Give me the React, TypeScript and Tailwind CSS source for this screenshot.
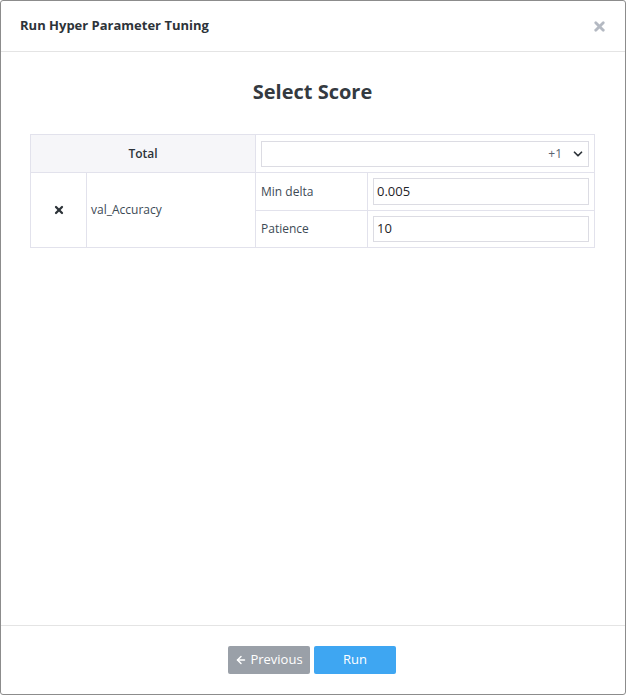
import { X, ChevronDown, ArrowLeft } from "lucide-react";

// Modal: pick a score for the tuning run.
export default function App() {
  return (
    <div className="flex h-[695px] w-[626px] flex-col rounded-[3px] border border-[#8c8c8c] bg-white font-['Open_Sans',sans-serif] text-[#343a40]">
      <div className="flex h-[51px] shrink-0 items-center justify-between border-b border-[#e4e4e4] pl-[19px] pr-[18px]">
        <h1 className="text-[13px] font-bold text-[#2d3339]">Run Hyper Parameter Tuning</h1>
        <X className="h-[15px] w-[15px] text-[#b4b9c2]" strokeWidth={4.5} />
      </div>

      <div className="flex-1 pl-[29px] pr-[30px]">
        <h2 className="mt-[25px] text-center text-[20px] font-bold text-[#343a40]">Select Score</h2>

        <table className="mt-[27px] w-full border-collapse text-[12px] text-[#3d4a55]">
          <tbody>
            <tr className="h-[38px]">
              <td colSpan={2} className="border border-[#e2e2ec] bg-[#f6f6f9] text-center font-semibold text-[#2d3339]">
                Total
              </td>
              <td colSpan={2} className="border border-[#e2e2ec] px-[5px]">
                <div className="flex h-[26px] items-center justify-end gap-[9px] border border-[#dcdce3] pl-[6px] pr-[3px]">
                  <span className="text-[#5a6570]">+1</span>
                  <ChevronDown className="h-[14px] w-[14px] text-[#2d3339]" strokeWidth={3} />
                </div>
              </td>
            </tr>
            <tr className="h-[38px]">
              <td rowSpan={2} className="w-[56px] border border-[#e2e2ec] text-center">
                <X className="mx-auto h-[12px] w-[12px] text-[#2d3339]" strokeWidth={4.5} />
              </td>
              <td rowSpan={2} className="w-[169px] border border-[#e2e2ec] pl-[4px]">
                val_Accuracy
              </td>
              <td className="w-[112px] border border-[#e2e2ec] pl-[5px]">Min delta</td>
              <td className="border border-[#e2e2ec] px-[5px]">
                <div className="flex h-[27px] items-center border border-[#dcdce3] px-[3px] text-[13px] text-[#1f2328]">
                  0.005
                </div>
              </td>
            </tr>
            <tr className="h-[37px]">
              <td className="border border-[#e2e2ec] pl-[5px]">Patience</td>
              <td className="border border-[#e2e2ec] px-[5px]">
                <div className="flex h-[26px] items-center border border-[#dcdce3] px-[3px] text-[13px] text-[#1f2328]">
                  10
                </div>
              </td>
            </tr>
          </tbody>
        </table>
      </div>

      <div className="flex h-[69px] shrink-0 items-start justify-center gap-[4px] border-t border-[#e4e4e4] pr-[2px] pt-[20px]">
        <button
          type="button"
          className="flex h-[28px] w-[82px] items-center justify-center gap-[3px] rounded-[2px] bg-[#9aa0a8] text-[13px] text-white"
        >
          <ArrowLeft className="h-[12px] w-[12px]" strokeWidth={3} />
          Previous
        </button>
        <button type="button" className="h-[28px] w-[82px] rounded-[2px] bg-[#3ea6f2] text-[13px] text-white">
          Run
        </button>
      </div>
    </div>
  );
}
